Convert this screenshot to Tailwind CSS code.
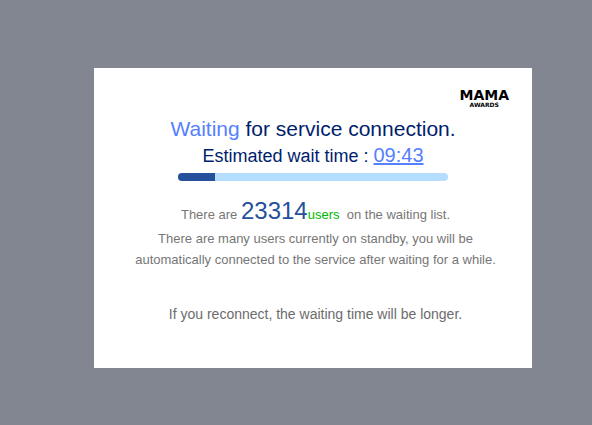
<!DOCTYPE html>
<html lang="en">

<head>
  <meta charset="UTF-8" />
  <meta name="viewport" content="width=device-width, initial-scale=1.0" />
  <title>Waiting Room</title>
  <script src="https://cdn.jsdelivr.net/npm/@tailwindcss/browser@4"></script>
</head>

<body class="bg-[#828690] font-['Liberation_Sans',Arial,sans-serif]">
  <div class="flex items-center justify-center min-h-screen pl-[34px] pt-[11px]">
    <main class="w-full max-w-[438px] bg-white pt-5 pb-11 text-center">
      <!-- logo -->
      <div class="flex justify-end pr-[23px]">
        <div class="flex flex-col items-center font-['DejaVu_Sans',sans-serif] font-bold text-black">
          <span class="text-[14px] leading-[14px]">MAMA</span>
          <span class="text-[6px] leading-[6px]">AWARDS</span>
        </div>
      </div>

      <h1 class="mt-2 text-[21px] leading-[25px] text-[#001e6c]"><span class="text-[#5580ff]">Waiting</span> for service connection.</h1>
      <p class="text-[18px] leading-7 text-[#001e6c]">
        <label for="progress">Estimated wait time :</label>
        <span class="text-[20px] text-[#5580ff] underline decoration-2">09:43</span>
      </p>
      <progress id="progress" value="37" max="270"
        class="block appearance-none w-full max-w-[270px] h-2 mx-auto mt-[3px] rounded-full overflow-hidden bg-[#b4ddff] [&::-webkit-progress-bar]:bg-[#b4ddff] [&::-webkit-progress-value]:bg-[#264f9c]"></progress>

      <div class="pl-[5px] text-[#767676]">
        <div class="mt-4 text-[13px] leading-[21px]">
          <p class="leading-[27px]">There are <strong class="font-normal text-[24px] text-[#264f9c]">23314</strong><span class="text-[#00b900]">users</span>&nbsp; on the waiting list.</p>
          <p>There are many users currently on standby, you will be<br />automatically connected to the service after waiting for a while.</p>
        </div>
        <p class="mt-[34px] text-[14px] leading-5 text-[#6c6c6c]">If you reconnect, the waiting time will be longer.</p>
      </div>
    </main>
  </div>
</body>

</html>
